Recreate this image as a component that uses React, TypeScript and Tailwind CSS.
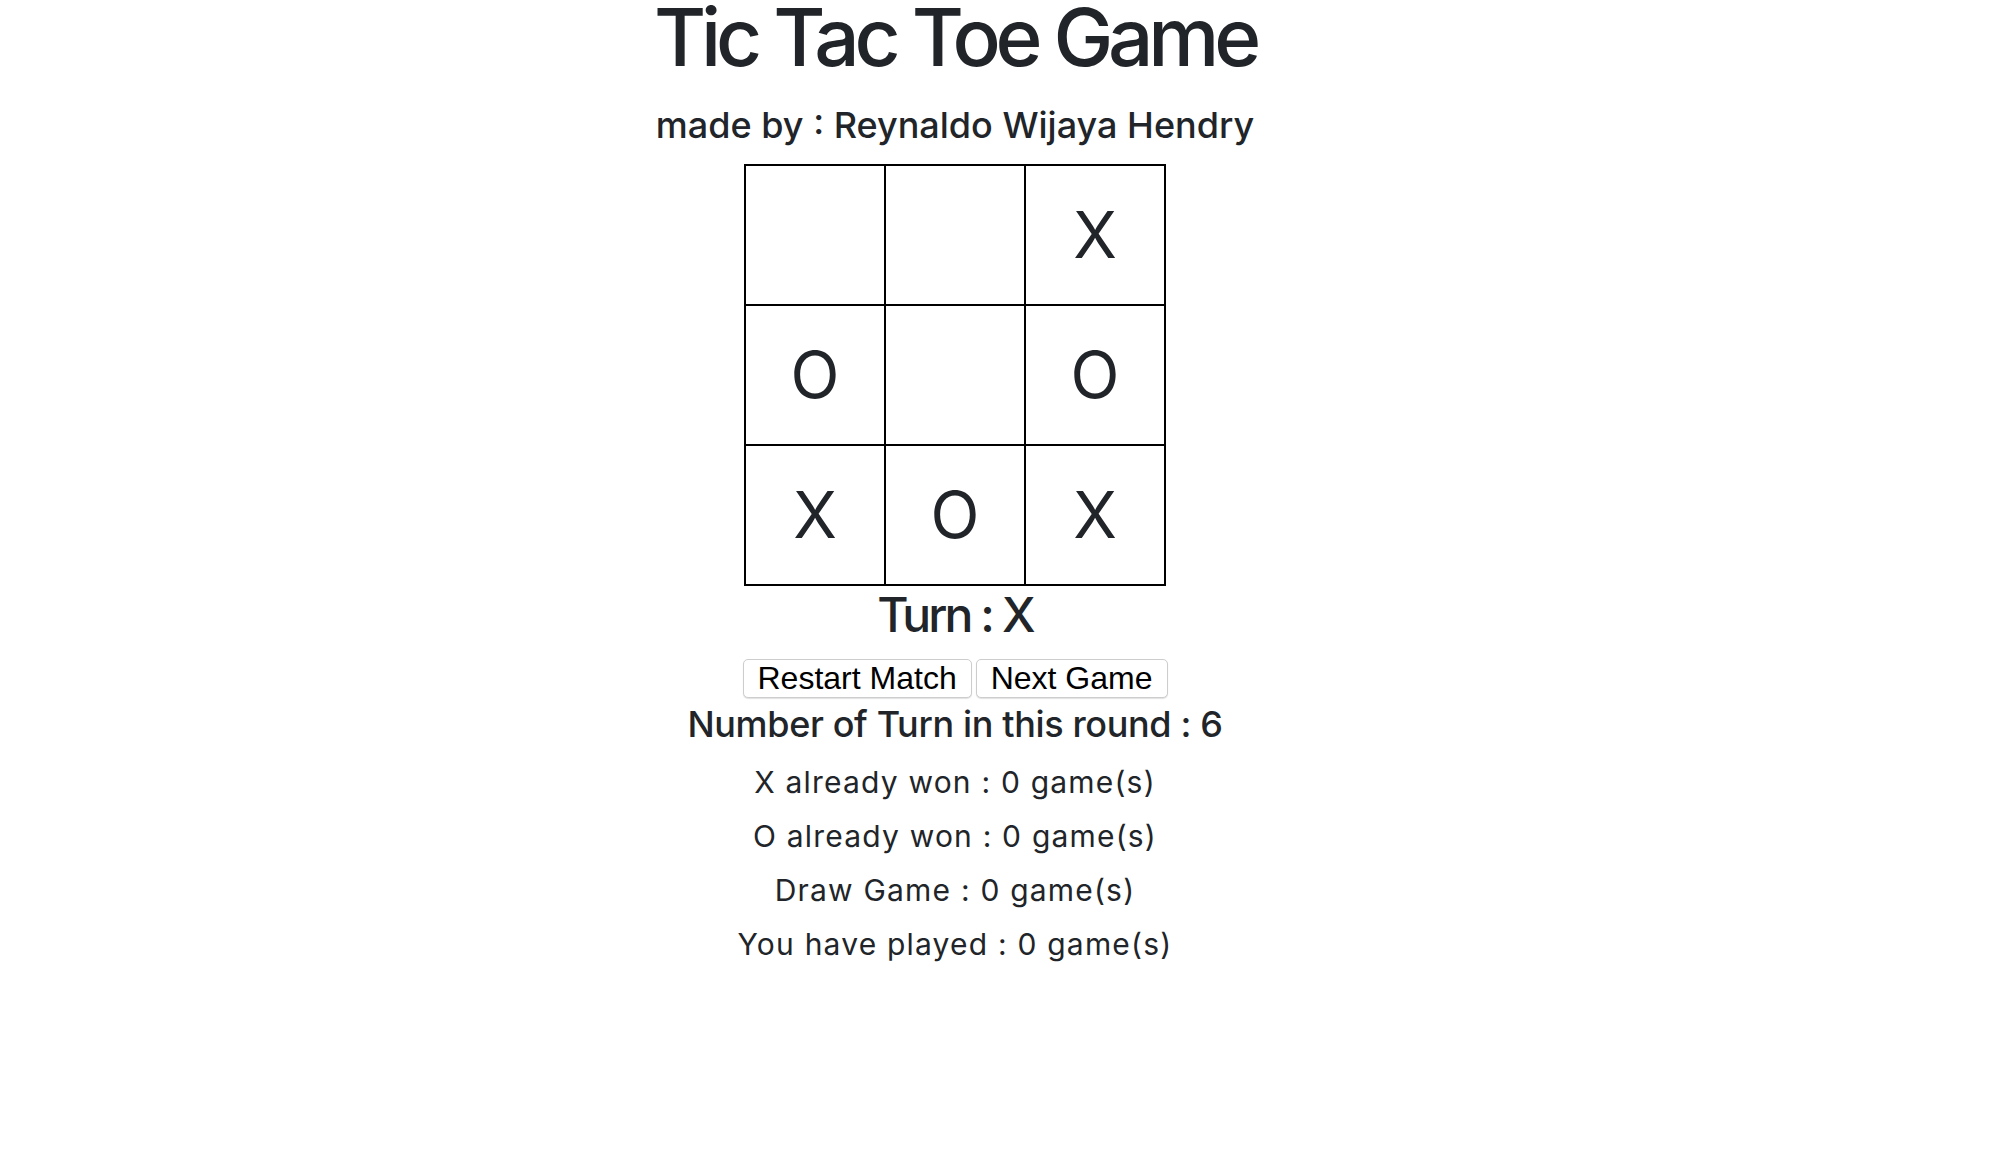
import { useState } from "react"

type Mark = "X" | "O" | ""

const startBoard: Mark[] = ["", "", "X", "O", "", "O", "X", "O", "X"]

function Cell({ value, onClick }: { value: Mark; onClick: () => void }) {
  return (
    <div
      onClick={onClick}
      className="w-[140px] h-[140px] border border-black flex items-center justify-center text-[64px] leading-none text-[#212529] cursor-pointer select-none"
    >
      {value}
    </div>
  )
}

export default function App() {
  const [board, setBoard] = useState<Mark[]>(startBoard)
  const [turn, setTurn] = useState<Mark>("X")
  const [count, setCount] = useState(6)

  const play = (i: number) => {
    if (board[i] !== "") return
    const next = [...board]
    next[i] = turn
    setBoard(next)
    setTurn(turn === "X" ? "O" : "X")
    setCount(count + 1)
  }

  const reset = () => {
    setBoard(["", "", "", "", "", "", "", "", ""])
    setTurn("X")
    setCount(0)
  }

  return (
    <div className="min-h-screen bg-white font-['Inter',sans-serif] text-[#212529]">
      <div className="w-[1910px] flex flex-col items-center">
        <h1 className="text-[80px] leading-[74px] font-medium tracking-[-0.065em]">Tic Tac Toe Game</h1>
        <h5 className="mt-[31px] text-[36px] leading-[40px] font-medium">made by : Reynaldo Wijaya Hendry</h5>

        {/* board */}
        <div className="mt-[19px] grid grid-cols-3 border border-black">
          {board.map((v, i) => (
            <Cell key={i} value={v} onClick={() => play(i)} />
          ))}
        </div>

        <h3 className="mt-[5px] text-[48px] leading-[48px] font-medium tracking-[-0.06em]">Turn : {turn}</h3>

        <div className="mt-[20px] flex gap-[4px]">
          <button
            onClick={reset}
            className="h-[39px] px-[14px] leading-[37px] text-[32px] text-black bg-white border border-[#cdcdcd] rounded-[5px] shadow-[0_1px_1px_rgba(0,0,0,0.12)] font-['Liberation_Sans',sans-serif]"
          >
            Restart Match
          </button>
          <button
            onClick={reset}
            className="h-[39px] px-[14px] leading-[37px] text-[32px] text-black bg-white border border-[#cdcdcd] rounded-[5px] shadow-[0_1px_1px_rgba(0,0,0,0.12)] font-['Liberation_Sans',sans-serif]"
          >
            Next Game
          </button>
        </div>

        <h5 className="mt-[6px] text-[36px] leading-[40px] font-medium tracking-[-0.01em]">Number of Turn in this round : {count}</h5>

        <div className="mt-[11px] flex flex-col items-center text-[30px] leading-[54px] tracking-[0.04em]">
          <p>X already won : 0 game(s)</p>
          <p>O already won : 0 game(s)</p>
          <p>Draw Game : 0 game(s)</p>
          <p>You have played : 0 game(s)</p>
        </div>
      </div>
    </div>
  )
}
